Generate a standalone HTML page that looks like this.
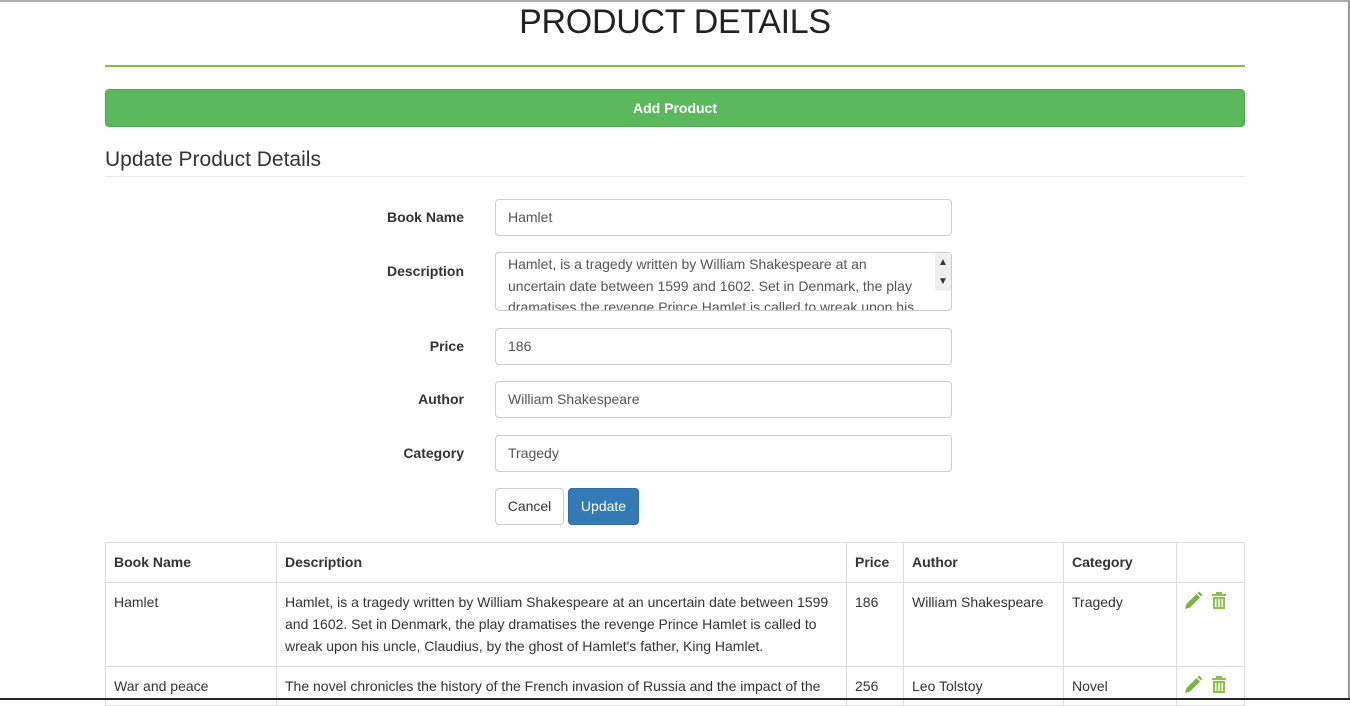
<!DOCTYPE html>
<html><head><style>
*{box-sizing:border-box;margin:0;padding:0}
body{width:1350px;height:700px;overflow:hidden;background:#fff;font-family:"Liberation Sans",Arial,sans-serif;font-size:14px;color:#333;position:relative}
.a{position:absolute}
h1{position:absolute;left:0;width:1350px;top:3px;text-align:center;font-weight:normal;font-size:34px;color:#222;letter-spacing:-0.3px}
.lbl{position:absolute;width:200px;left:264px;text-align:right;font-weight:bold;font-size:14px;color:#333}
.inp{position:absolute;left:495px;width:457px;height:37px;border:1px solid #ccc;border-radius:4px;padding:9px 12px;font-size:14px;color:#555}
table{position:absolute;left:105px;top:542px;width:1140px;border-collapse:collapse}
td,th{border:1px solid #ddd;padding:8px;vertical-align:top;text-align:left;line-height:22px;font-size:14px}
th{height:40px;padding:10px 8px;line-height:19px}
</style></head><body>
<div class="a" style="left:0;top:0;width:1350px;height:2px;background:#aaa"></div>
<div class="a" style="right:0;top:0;width:2px;height:700px;background:#999"></div>
<div class="a" style="left:0;bottom:0;width:1350px;height:2px;background:#223;z-index:2"></div>
<h1>PRODUCT DETAILS</h1>
<div class="a" style="left:105px;top:65px;width:1140px;height:2px;background:#8dba3b"></div>
<div class="a" style="left:105px;top:89px;width:1140px;height:38px;background:#5cb85c;border:1px solid #4cae4c;border-radius:4px;color:#fff;font-weight:bold;text-align:center;line-height:36px">Add Product</div>
<div class="a" style="left:105px;top:148px;font-size:21px;color:#333">Update Product Details</div>
<div class="a" style="left:105px;top:176px;width:1140px;height:1px;background:#e5e5e5"></div>
<div class="lbl" style="top:209px">Book Name</div>
<div class="inp" style="top:199px">Hamlet</div>
<div class="lbl" style="top:263px">Description</div>
<div class="inp" style="top:252px;height:59px;padding:1px 30px 0 12px;line-height:21.5px;overflow:hidden">Hamlet, is a tragedy written by William Shakespeare at an uncertain date between 1599 and 1602. Set in Denmark, the play dramatises the revenge Prince Hamlet is called to wreak upon his</div>
<div class="a" style="left:935px;top:253px;width:16px;height:38px;background:#f0f0f0;font-size:10px;text-align:center;line-height:19px;color:#333">▲<br>▼</div>
<div class="lbl" style="top:338px">Price</div>
<div class="inp" style="top:328px">186</div>
<div class="lbl" style="top:391px">Author</div>
<div class="inp" style="top:381px">William Shakespeare</div>
<div class="lbl" style="top:445px">Category</div>
<div class="inp" style="top:435px">Tragedy</div>
<div class="a" style="left:495px;top:488px;width:69px;height:37px;border:1px solid #ccc;border-radius:4px;text-align:center;line-height:35px">Cancel</div>
<div class="a" style="left:568px;top:488px;width:71px;height:37px;background:#337ab7;border:1px solid #2e6da4;border-radius:4px;color:#fff;text-align:center;line-height:35px">Update</div>
<table>
<tr><th style="width:171px">Book Name</th><th style="width:570px">Description</th><th style="width:57px">Price</th><th style="width:160px">Author</th><th style="width:113px">Category</th><th></th></tr>
<tr style="height:84px"><td>Hamlet</td><td>Hamlet, is a tragedy written by William Shakespeare at an uncertain date between 1599 and 1602. Set in Denmark, the play dramatises the revenge Prince Hamlet is called to wreak upon his uncle, Claudius, by the ghost of Hamlet's father, King Hamlet.</td><td>186</td><td>William Shakespeare</td><td>Tragedy</td><td style="padding:8px 0 0 7px"><svg width="44" height="20" viewBox="0 0 44 20"><path d="M1 18l1.5-5 10-10 3.5 3.5-10 10z" fill="#7cb342"/><path d="M13.5 2l1.5-1.5 3.5 3.5-1.5 1.5z" fill="#7cb342"/><rect x="28" y="3" width="14" height="2" fill="#8bc34a"/><rect x="32" y="1" width="6" height="2" fill="#8bc34a"/><path d="M29 6h12v12h-12z M31 8v8h1.5V8z M34.25 8v8h1.5V8z M37.5 8v8h1.5V8z" fill="#8bc34a" fill-rule="evenodd"/></svg></td></tr>
<tr><td>War and peace</td><td>The novel chronicles the history of the French invasion of Russia and the impact of the</td><td>256</td><td>Leo Tolstoy</td><td>Novel</td><td style="padding:8px 0 0 7px"><svg width="44" height="20" viewBox="0 0 44 20"><path d="M1 18l1.5-5 10-10 3.5 3.5-10 10z" fill="#7cb342"/><path d="M13.5 2l1.5-1.5 3.5 3.5-1.5 1.5z" fill="#7cb342"/><rect x="28" y="3" width="14" height="2" fill="#8bc34a"/><rect x="32" y="1" width="6" height="2" fill="#8bc34a"/><path d="M29 6h12v12h-12z M31 8v8h1.5V8z M34.25 8v8h1.5V8z M37.5 8v8h1.5V8z" fill="#8bc34a" fill-rule="evenodd"/></svg></td></tr>
</table>
</body></html>
